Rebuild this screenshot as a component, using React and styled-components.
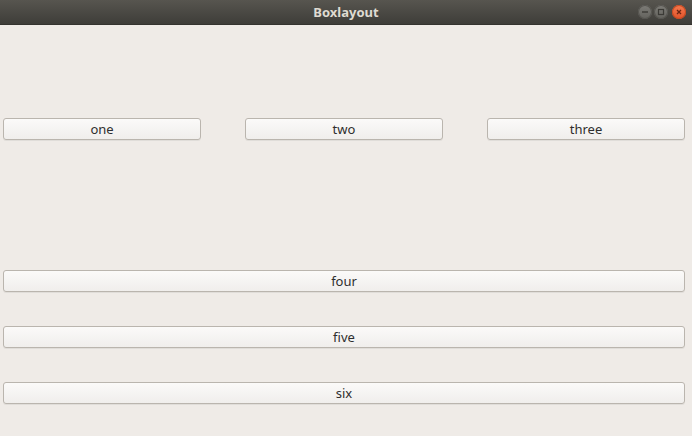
import styled, { createGlobalStyle } from "styled-components";

const Global = createGlobalStyle`
  html, body {
    margin: 0;
    padding: 0;
    width: 692px;
    height: 436px;
    overflow: hidden;
    background: #efebe7;
    font-family: "Noto Sans", "DejaVu Sans", sans-serif;
  }
`;

const Window = styled.div`
  width: 692px;
  height: 436px;
  display: flex;
  flex-direction: column;
  background: #efebe7;
`;

const TitleBar = styled.div`
  position: relative;
  height: 25px;
  flex: none;
  display: flex;
  align-items: center;
  justify-content: center;
  background: linear-gradient(#57554f, #3e3d39);
  border-bottom: 1px solid #34332f;
  box-sizing: border-box;
`;

const Title = styled.span`
  color: #dfdbd2;
  font-size: 13px;
  font-weight: 700;
`;

const Controls = styled.div`
  position: absolute;
  right: 6px;
  top: 5px;
  display: flex;
  align-items: center;
  gap: 2px;
`;

const Dot = styled.div`
  width: 14px;
  height: 14px;
  border-radius: 50%;
  margin-left: ${(p) => (p.$close ? "2px" : "0")};
  display: flex;
  align-items: center;
  justify-content: center;
  background: ${(p) => (p.$close ? "linear-gradient(#f47a4f, #e0522a)" : "linear-gradient(#7d7c77, #63625d)")};
  box-shadow: inset 0 0 0 1px ${(p) => (p.$close ? "#c54a22" : "#55544f")};
`;

const Body = styled.div`
  flex: 1;
  display: flex;
  flex-direction: column;
  padding: 93px 7px 0 3px;
`;

const Row = styled.div`
  display: flex;
  justify-content: space-between;
  margin-bottom: ${(p) => p.$after || 0}px;
`;

const Button = styled.button`
  box-sizing: border-box;
  height: 22px;
  width: ${(p) => (p.$full ? "100%" : "198px")};
  margin-bottom: ${(p) => p.$after || 0}px;
  padding: 0;
  border: 1px solid #bab5ae;
  border-radius: 3px;
  background: linear-gradient(#fbfaf9, #f0eeec);
  box-shadow: 0 1px 0 rgba(0, 0, 0, 0.06);
  font-family: "Noto Sans", "DejaVu Sans", sans-serif;
  font-size: 13px;
  color: #2e2e2e;
  line-height: 19px;
`;

export default function App() {
  return (
    <>
      <Global />
      <Window>
        <TitleBar>
          <Title>Boxlayout</Title>
          <Controls>
            <Dot>
              <svg width="8" height="8" viewBox="0 0 8 8">
                <path d="M1 4h6" stroke="#3b3a36" strokeWidth="1.4" />
              </svg>
            </Dot>
            <Dot>
              <svg width="8" height="8" viewBox="0 0 8 8">
                <rect x="1.5" y="1.5" width="5" height="5" fill="none" stroke="#3b3a36" strokeWidth="1.2" />
              </svg>
            </Dot>
            <Dot $close>
              <svg width="8" height="8" viewBox="0 0 8 8">
                <path d="M2 2l4 4M6 2l-4 4" stroke="#6a2412" strokeWidth="1.3" />
              </svg>
            </Dot>
          </Controls>
        </TitleBar>
        <Body>
          <Row $after={130}>
            <Button>one</Button>
            <Button>two</Button>
            <Button>three</Button>
          </Row>
          <Button $full $after={34}>four</Button>
          <Button $full $after={34}>five</Button>
          <Button $full>six</Button>
        </Body>
      </Window>
    </>
  );
}
